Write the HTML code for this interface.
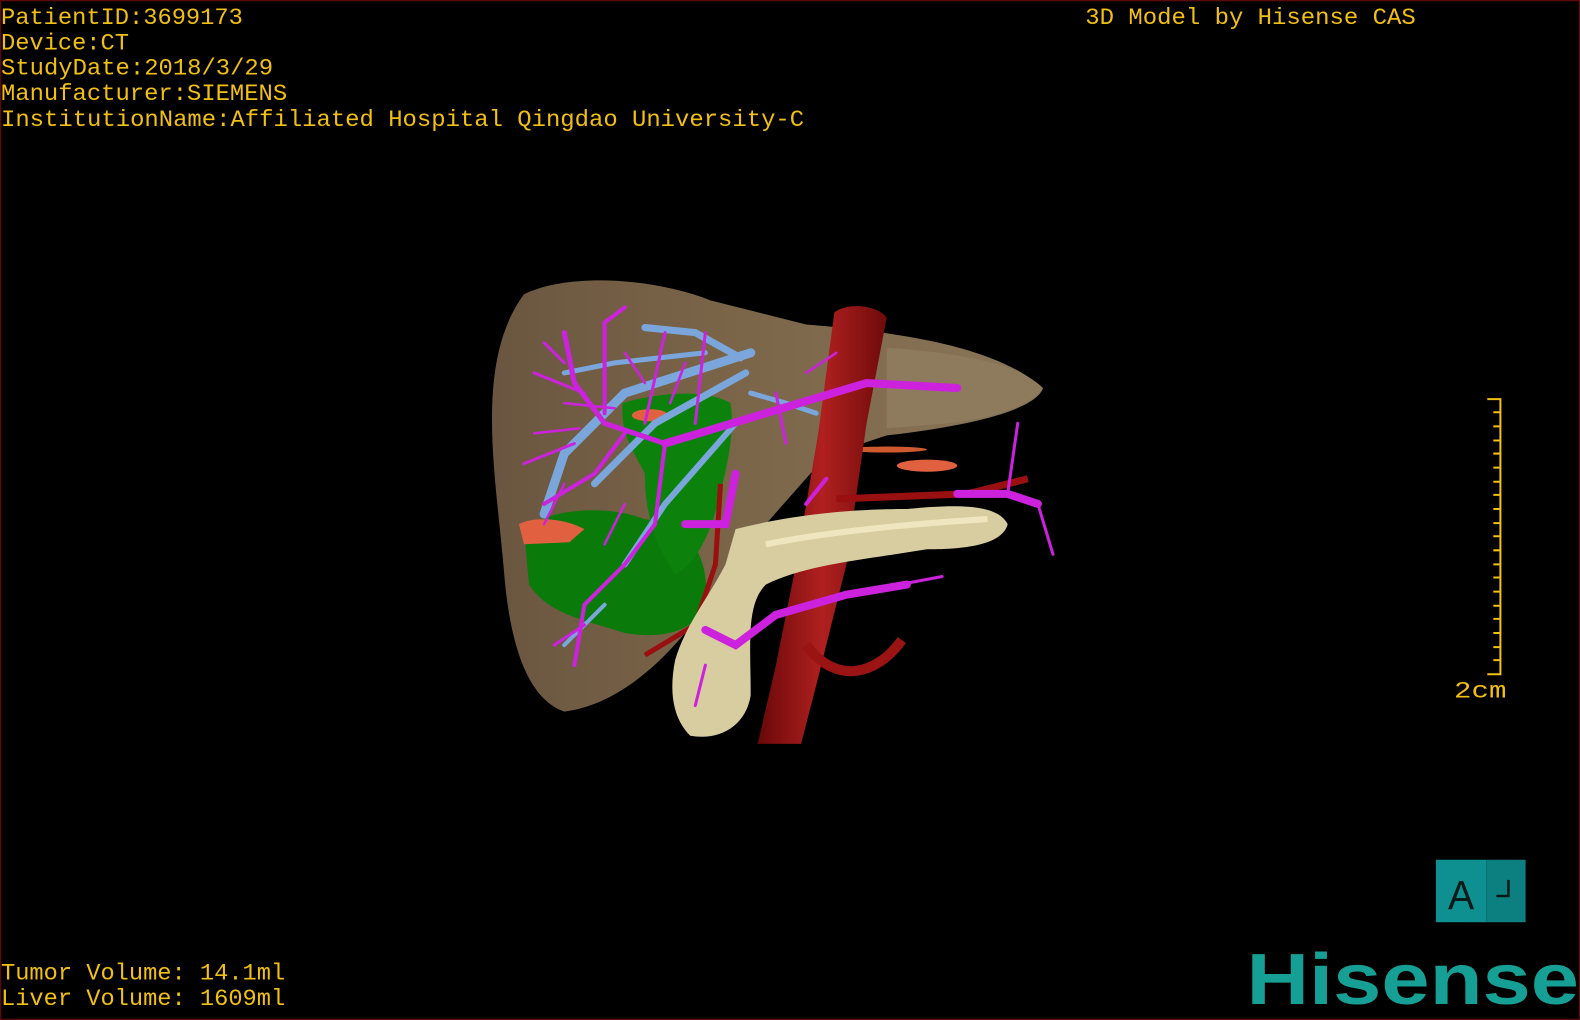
<!DOCTYPE html>
<html><head><meta charset="utf-8"><style>
html,body{margin:0;padding:0;background:#000;width:1580px;height:1020px;overflow:hidden}
svg{display:block}
</style></head><body>
<svg width="1580" height="1020" viewBox="0 0 1568 1012" preserveAspectRatio="none" xmlns="http://www.w3.org/2000/svg">
<defs>
<linearGradient id="liv" x1="0" y1="0" x2="1" y2="0"><stop offset="0" stop-color="#6a5640"/><stop offset="0.4" stop-color="#7a6448"/><stop offset="1" stop-color="#8a7658"/></linearGradient>
<linearGradient id="aor" x1="0" y1="0" x2="1" y2="0"><stop offset="0" stop-color="#6a0808"/><stop offset="0.5" stop-color="#b02020"/><stop offset="1" stop-color="#700a0a"/></linearGradient>
<linearGradient id="ivc" x1="0" y1="0" x2="1" y2="0"><stop offset="0" stop-color="#4f7fb8"/><stop offset="0.5" stop-color="#9cc4ee"/><stop offset="1" stop-color="#5a88c0"/></linearGradient>
</defs>
<rect x="0" y="0" width="1568" height="1012" fill="#000"/>
<rect x="0.5" y="0.5" width="1567" height="1011" fill="none" stroke="#5a0a0a" stroke-width="1.5"/>
<path d="M520,292 C565,270 650,276 705,298 L800,322 C900,330 990,345 1035,385 C1030,402 985,420 880,432 L820,452 L760,520 L705,595 C660,660 610,700 560,706 C520,692 505,630 500,565 C492,470 470,360 520,292 Z" fill="url(#liv)"/>
<path d="M880,345 C950,350 1010,360 1035,385 C1025,400 990,415 940,420 L880,425 Z" fill="#8e7a5c"/>
<path d="M520,525 C545,505 600,500 640,515 C690,520 705,560 700,600 C690,625 660,635 620,628 C580,615 545,610 525,580 Z" fill="#0a7a0a"/>
<path d="M618,400 C650,390 700,385 725,400 C730,430 720,470 712,500 C705,530 690,560 670,570 C650,540 640,510 640,470 C630,450 615,430 618,400 Z" fill="#0c820c"/>
<path d="M515,520 C530,512 560,514 580,525 L565,538 L520,540 Z" fill="#e06040"/>
<ellipse cx="645" cy="412" rx="18" ry="6" fill="#e06040"/>
<ellipse cx="920" cy="462" rx="30" ry="6" fill="#e06040"/>
<ellipse cx="880" cy="446" rx="40" ry="3" fill="#d05a30"/>
<g stroke="#7aa6dc" stroke-linecap="round" fill="none">
<path d="M745,305 L745,525" stroke="url(#ivc)" stroke-width="34"/>
<path d="M745,350 L620,390 L560,450 L540,510" stroke-width="9"/>
<path d="M740,370 L650,420 L590,480" stroke-width="7"/>
<path d="M735,355 L690,330 L640,325" stroke-width="7"/>
<path d="M745,390 L780,400 L810,410" stroke-width="5"/>
<path d="M700,350 L610,360 L560,370" stroke-width="5"/>
<path d="M730,420 L660,500 L620,560" stroke-width="6"/>
<path d="M600,600 L560,640" stroke-width="4"/>
</g>
<path d="M828,310 C840,300 870,302 880,315 L860,420 L840,560 L810,680 L795,738 L752,738 L770,660 L790,560 L812,430 Z" fill="url(#aor)"/>
<path d="M800,640 C830,680 870,670 895,635" stroke="#9a1414" stroke-width="10" fill="none"/>
<path d="M830,495 L960,490 L1020,475" stroke="#9a1010" stroke-width="7" fill="none"/>
<path d="M715,480 L710,560 L690,620 L640,650" stroke="#9a1010" stroke-width="5" fill="none"/>
<path d="M730,525 C780,512 840,505 900,505 C950,500 990,500 1000,520 C995,540 960,545 920,545 C860,555 800,560 760,580 C740,600 745,640 745,690 C740,720 715,735 685,730 C665,710 665,680 670,655 C680,620 705,590 720,560 Z" fill="#d8cda0"/>
<path d="M760,540 C820,528 900,520 980,515" stroke="#efe6c0" stroke-width="6" fill="none"/>
<g stroke="#cc22dd" stroke-linecap="round" fill="none">
<path d="M660,440 L760,410 L860,380 L950,385" stroke-width="8"/>
<path d="M660,440 L600,420 L570,380 L560,330" stroke-width="5"/>
<path d="M620,430 L590,470 L540,500" stroke-width="4"/>
<path d="M600,410 L600,320 L620,305" stroke-width="4"/>
<path d="M580,390 L530,370" stroke-width="3"/>
<path d="M570,440 L520,460" stroke-width="3"/>
<path d="M640,420 L660,330" stroke-width="3"/>
<path d="M690,420 L700,330" stroke-width="3"/>
<path d="M660,440 L650,520 L620,560 L580,600 L570,660" stroke-width="4"/>
<path d="M580,620 L550,640" stroke-width="3"/>
<path d="M730,470 L720,520 L680,520" stroke-width="8"/>
<path d="M900,580 L840,590 L770,610 L730,640 L700,625" stroke-width="8"/>
<path d="M840,590 L935,572" stroke-width="3"/>
<path d="M800,500 L820,475" stroke-width="4"/>
<path d="M950,490 L1000,490 L1030,500" stroke-width="8"/>
<path d="M1000,490 L1010,420" stroke-width="3"/>
<path d="M1030,500 L1045,550" stroke-width="3"/>
<path d="M770,390 L780,440" stroke-width="3"/>
<path d="M540,340 L560,360" stroke-width="3"/>
<path d="M700,660 L690,700" stroke-width="3"/>
<path d="M620,350 L640,380 M560,400 L610,405 M530,430 L575,425 M680,360 L665,400 M800,370 L830,350 M560,480 L540,520 M620,500 L600,540"  stroke-width="2.5"/>
</g>
<g font-family="Liberation Mono, monospace" font-size="23" fill="#f2c010">
<text x="1" y="24" textLength="240" lengthAdjust="spacingAndGlyphs">PatientID:3699173</text>
<text x="1" y="49" textLength="127" lengthAdjust="spacingAndGlyphs">Device:CT</text>
<text x="1" y="74" textLength="270" lengthAdjust="spacingAndGlyphs">StudyDate:2018/3/29</text>
<text x="1" y="99" textLength="284" lengthAdjust="spacingAndGlyphs">Manufacturer:SIEMENS</text>
<text x="1" y="125" textLength="797" lengthAdjust="spacingAndGlyphs">InstitutionName:Affiliated Hospital Qingdao University-C</text>
<text x="1077" y="24" textLength="328" lengthAdjust="spacingAndGlyphs">3D Model by Hisense CAS</text>
<text x="1" y="972" textLength="282" lengthAdjust="spacingAndGlyphs">Tumor Volume: 14.1ml</text>
<text x="1" y="997" textLength="282" lengthAdjust="spacingAndGlyphs">Liver Volume: 1609ml</text>
<text x="1443" y="692" textLength="52" lengthAdjust="spacingAndGlyphs">2cm</text>
</g>
<g stroke="#f2c010" stroke-width="2" fill="none">
<path d="M1476,396 L1489,396 L1489,669 L1476,669"/>
<path d="M1482,409 H1489 M1482,423 H1489 M1482,437 H1489 M1482,450 H1489 M1482,464 H1489 M1482,478 H1489 M1482,491 H1489 M1482,505 H1489 M1482,519 H1489 M1482,532 H1489 M1482,546 H1489 M1482,560 H1489 M1482,573 H1489 M1482,587 H1489 M1482,601 H1489 M1482,614 H1489 M1482,628 H1489 M1482,642 H1489 M1482,655 H1489"/>
</g>
<rect x="1425" y="853" width="50" height="62" fill="#0f9090"/>
<rect x="1475" y="853" width="39" height="62" fill="#0c8080"/>
<text x="1437" y="902" font-family="Liberation Sans, sans-serif" font-size="40" fill="#0a1a1a" textLength="26" lengthAdjust="spacingAndGlyphs">A</text>
<path d="M1497,873 V889 H1485" stroke="#0a1a1a" stroke-width="2.5" fill="none"/>
<text x="1237" y="996" font-family="Liberation Sans, sans-serif" font-weight="bold" font-size="72" fill="#16a095" textLength="330" lengthAdjust="spacingAndGlyphs">Hisense</text>
</svg>
</body></html>
